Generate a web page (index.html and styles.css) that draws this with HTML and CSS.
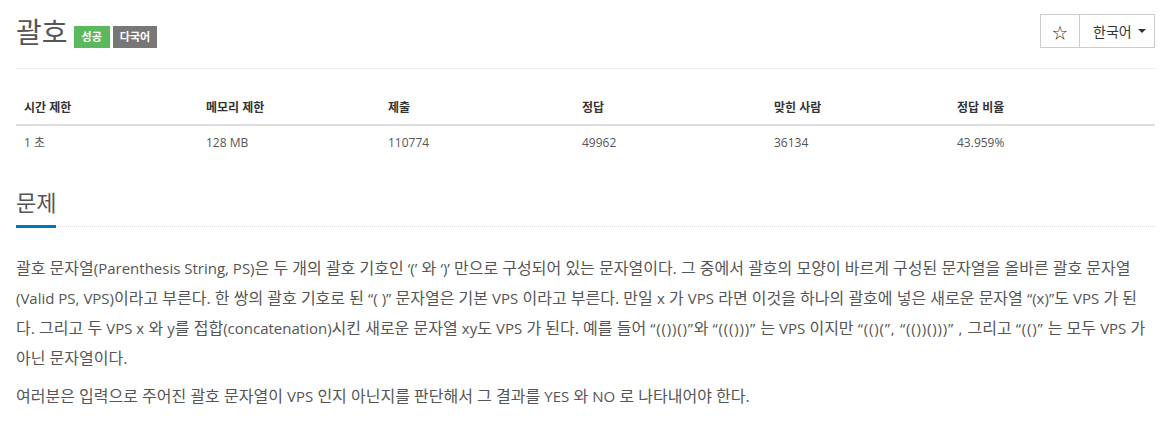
FILE: index.html
```html
<!DOCTYPE html>
<html lang="ko">
<head>
<meta charset="utf-8">
<link rel="stylesheet" href="styles.css">
</head>
<body>
<div class="page">
  <div class="page-header">
    <h1 class="title">괄호 <span class="label label-success">성공</span><span class="label label-default">다국어</span></h1>
    <div class="btn-group">
      <button class="btn btn-star">☆</button>
      <button class="btn btn-lang">한국어 <span class="caret"></span></button>
    </div>
  </div>

  <table class="info">
    <thead>
      <tr>
        <th class="c1">시간 제한</th>
        <th class="c2">메모리 제한</th>
        <th class="c3">제출</th>
        <th class="c4">정답</th>
        <th class="c5">맞힌 사람</th>
        <th class="c6">정답 비율</th>
      </tr>
    </thead>
    <tbody>
      <tr>
        <td>1 초 </td>
        <td>128 MB</td>
        <td>110774</td>
        <td>49962</td>
        <td>36134</td>
        <td>43.959%</td>
      </tr>
    </tbody>
  </table>

  <section class="problem">
    <div class="headline"><h2>문제</h2></div>
    <div class="desc">
      <p>괄호 문자열<span class="en">(Parenthesis String, PS)</span>은 두 개의 괄호 기호인 <span class="en">‘(’</span> 와 <span class="en">‘)’</span> 만으로 구성되어 있는 문자열이다. 그 중에서 괄호의 모양이 바르게 구성된 문자열을 올바른 괄호 문자열<span class="en">(Valid PS, VPS)</span>이라고 부른다. 한 쌍의 괄호 기호로 된 <span class="en">“( )”</span> 문자열은 기본 <span class="en">VPS</span> 이라고 부른다. 만일 <span class="en">x</span> 가 <span class="en">VPS</span> 라면 이것을 하나의 괄호에 넣은 새로운 문자열 <span class="en">“(x)”</span>도 <span class="en">VPS</span> 가 된다. 그리고 두 <span class="en">VPS x</span> 와 <span class="en">y</span>를 접합<span class="en">(concatenation)</span>시킨 새로운 문자열 <span class="en">xy</span>도 <span class="en">VPS</span> 가 된다. 예를 들어 <span class="en q">“(())()”</span>와 <span class="en q">“((()))”</span> 는 <span class="en">VPS</span> 이지만 <span class="en q">“(()(”, “(())()))” ,</span> 그리고 <span class="en q">“(()”</span> 는 모두 <span class="en">VPS</span> 가 아닌 문자열이다.</p>
      <p>여러분은 입력으로 주어진 괄호 문자열이 <span class="en">VPS</span> 인지 아닌지를 판단해서 그 결과를 <span class="en">YES</span> 와 <span class="en">NO</span> 로 나타내어야 한다.</p>
    </div>
  </section>
</div>
</body>
</html>
```

FILE: styles.css
```css
html, body {
  margin: 0;
  padding: 0;
  background: #fff;
}
body {
  font-family: "Open Sans", "Noto Sans CJK KR", sans-serif;
  color: #555;
  font-size: 13px;
}
.page {
  padding: 0 16px;
}
.page-header {
  display: flex;
  justify-content: space-between;
  align-items: flex-start;
  border-bottom: 1px solid #eee;
  padding-top: 14px;
  height: 54px;
  box-sizing: content-box;
}
.title {
  margin: 0;
  font-size: 28px;
  font-weight: 400;
  line-height: 36px;
  color: #555;
  display: flex;
  align-items: center;
}
.label {
  display: inline-block;
  font-size: 11px;
  font-weight: 700;
  color: #fff;
  line-height: 22px;
  height: 22px;
  padding: 0 7px;
  margin-top: 9px;
}
.label-success {
  background: #5cb85c;
  padding: 0 8px;
  margin-left: 6px;
}
.label-default {
  background: #777;
  margin-left: 3px;
}
.btn-group {
  display: flex;
}
.btn {
  font-family: "Open Sans", "Noto Sans CJK KR", sans-serif;
  background: #fff;
  border: 1px solid #ccc;
  color: #333;
  height: 34px;
  font-size: 14px;
  margin: 0;
  padding: 0 12px;
  display: flex;
  align-items: center;
  white-space: nowrap;
  box-sizing: border-box;
}
.btn-star {
  width: 40px;
  justify-content: center;
  font-size: 15px;
  padding: 0;
}
.btn-lang {
  border-left: none;
  width: 75px;
  padding: 0 11px 0 13px;
  justify-content: space-between;
}
.caret {
  width: 0;
  height: 0;
  border-left: 4px solid transparent;
  border-right: 4px solid transparent;
  border-top: 4px solid #333;
  margin-left: 6px;
}
.info {
  width: 100%;
  border-collapse: collapse;
  table-layout: fixed;
  margin-top: 16px;
}
.info th, .info td {
  text-align: left;
  padding: 8px;
  line-height: 20px;
  font-size: 12px;
}
.info th {
  font-weight: 700;
  color: #333;
  border-bottom: 2px solid #ddd;
  padding-top: 13px;
  padding-bottom: 6px;
  box-sizing: border-box;
}
.info td {
  color: #555;
  padding-top: 7px;
}
.c1, .c2 { width: 182px; }
.c3 { width: 194px; }
.c4 { width: 192px; }
.c5 { width: 183px; }
.problem {
  margin-top: 24px;
}
.headline {
  border-bottom: 1px dotted #ddd;
  margin-bottom: 26px;
}
.headline h2 {
  display: inline-block;
  margin: 0 0 -2px 0;
  font-size: 22px;
  font-weight: 400;
  line-height: 34px;
  color: #555;
  border-bottom: 3px solid #0076c0;
  padding-bottom: 6px;
}
.desc p {
  margin: 0 0 8px 0;
  font-size: 16px;
  line-height: 30px;
  color: #555;
}
.desc .en {
  font-size: 15px;
}
.desc .q {
  letter-spacing: 0.8px;
}
```
